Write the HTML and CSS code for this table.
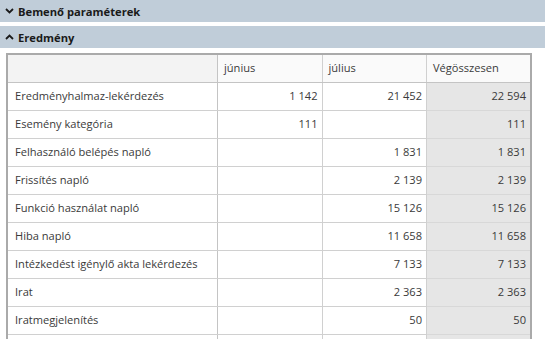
FILE: index.html
```html
<!DOCTYPE html>
<html lang="hu">
<head>
<meta charset="utf-8">
<link rel="stylesheet" href="styles.css">
</head>
<body>
<div class="section-head">
  <svg class="chev" width="9" height="6" viewBox="0 0 9 6"><path d="M1 1 L4.5 4.5 L8 1" fill="none" stroke="#1a1a1a" stroke-width="1.8"/></svg>
  <span>Bemenő paraméterek</span>
</div>
<div class="section-head second">
  <svg class="chev" width="9" height="6" viewBox="0 0 9 6"><path d="M1 5 L4.5 1.5 L8 5" fill="none" stroke="#1a1a1a" stroke-width="1.8"/></svg>
  <span>Eredmény</span>
</div>
<div class="wrap">
<table class="pivot">
  <thead>
    <tr>
      <th class="corner"></th>
      <th>június</th>
      <th>július</th>
      <th class="total-h">Végösszesen</th>
    </tr>
  </thead>
  <tbody>
    <tr><td class="lab">Eredményhalmaz-lekérdezés</td><td class="num">1 142</td><td class="num">21 452</td><td class="num tot">22 594</td></tr>
    <tr><td class="lab">Esemény kategória</td><td class="num">111</td><td class="num"></td><td class="num tot">111</td></tr>
    <tr><td class="lab">Felhasználó belépés napló</td><td class="num"></td><td class="num">1 831</td><td class="num tot">1 831</td></tr>
    <tr><td class="lab">Frissítés napló</td><td class="num"></td><td class="num">2 139</td><td class="num tot">2 139</td></tr>
    <tr><td class="lab">Funkció használat napló</td><td class="num"></td><td class="num">15 126</td><td class="num tot">15 126</td></tr>
    <tr><td class="lab">Hiba napló</td><td class="num"></td><td class="num">11 658</td><td class="num tot">11 658</td></tr>
    <tr><td class="lab">Intézkedést igénylő akta lekérdezés</td><td class="num"></td><td class="num">7 133</td><td class="num tot">7 133</td></tr>
    <tr><td class="lab">Irat</td><td class="num"></td><td class="num">2 363</td><td class="num tot">2 363</td></tr>
    <tr><td class="lab">Iratmegjelenítés</td><td class="num"></td><td class="num">50</td><td class="num tot">50</td></tr>
    <tr><td class="lab"></td><td class="num"></td><td class="num"></td><td class="num tot"></td></tr>
  </tbody>
</table>
</div>
</body>
</html>
```

FILE: styles.css
```css
html, body {
  margin: 0;
  padding: 0;
  background: #ffffff;
  overflow: hidden;
}
body {
  font-family: "Open Sans", "Noto Sans", sans-serif;
  font-size: 11.1px;
  color: #3a3a3a;
}
.section-head {
  height: 22px;
  background: #c0cdd9;
  display: flex;
  align-items: center;
  padding-left: 5px;
  gap: 4px;
  font-weight: bold;
  font-size: 11.2px;
  color: #1a1a1a;
  margin-bottom: 4px;
}
.section-head.second {
  margin-bottom: 0;
}
.chev {
  display: block;
}
.wrap {
  padding: 5px 0 0 6px;
}
.pivot {
  border-collapse: collapse;
  table-layout: fixed;
  width: 526px;
  border-top: 2px solid #aaaaaa;
  border-left: 2px solid #aaaaaa;
}
.pivot th, .pivot td {
  height: 25px;
  padding: 0 0 2px 0;
  border: 1px solid #d0d0d0;
  white-space: nowrap;
  overflow: hidden;
}
.pivot th {
  font-weight: normal;
  text-align: left;
  padding-left: 6px;
  background: #fafafa;
  border-bottom-color: #c4c4c4;
}
.pivot th.corner {
  width: 203px;
  background: #f3f3f3;
  border-right-color: #c4c4c4;
}
.pivot th.total-h {
  border-right: 2px solid #aaaaaa;
}
.pivot td.lab {
  padding-left: 7px;
  background: #ffffff;
  border-right-color: #c4c4c4;
}
.pivot td.num {
  text-align: right;
  padding-right: 4px;
}
.pivot td.tot {
  background: #e6e6e6;
  border-right: 2px solid #aaaaaa;
  border-bottom-color: #d8d8d8;
}
```
